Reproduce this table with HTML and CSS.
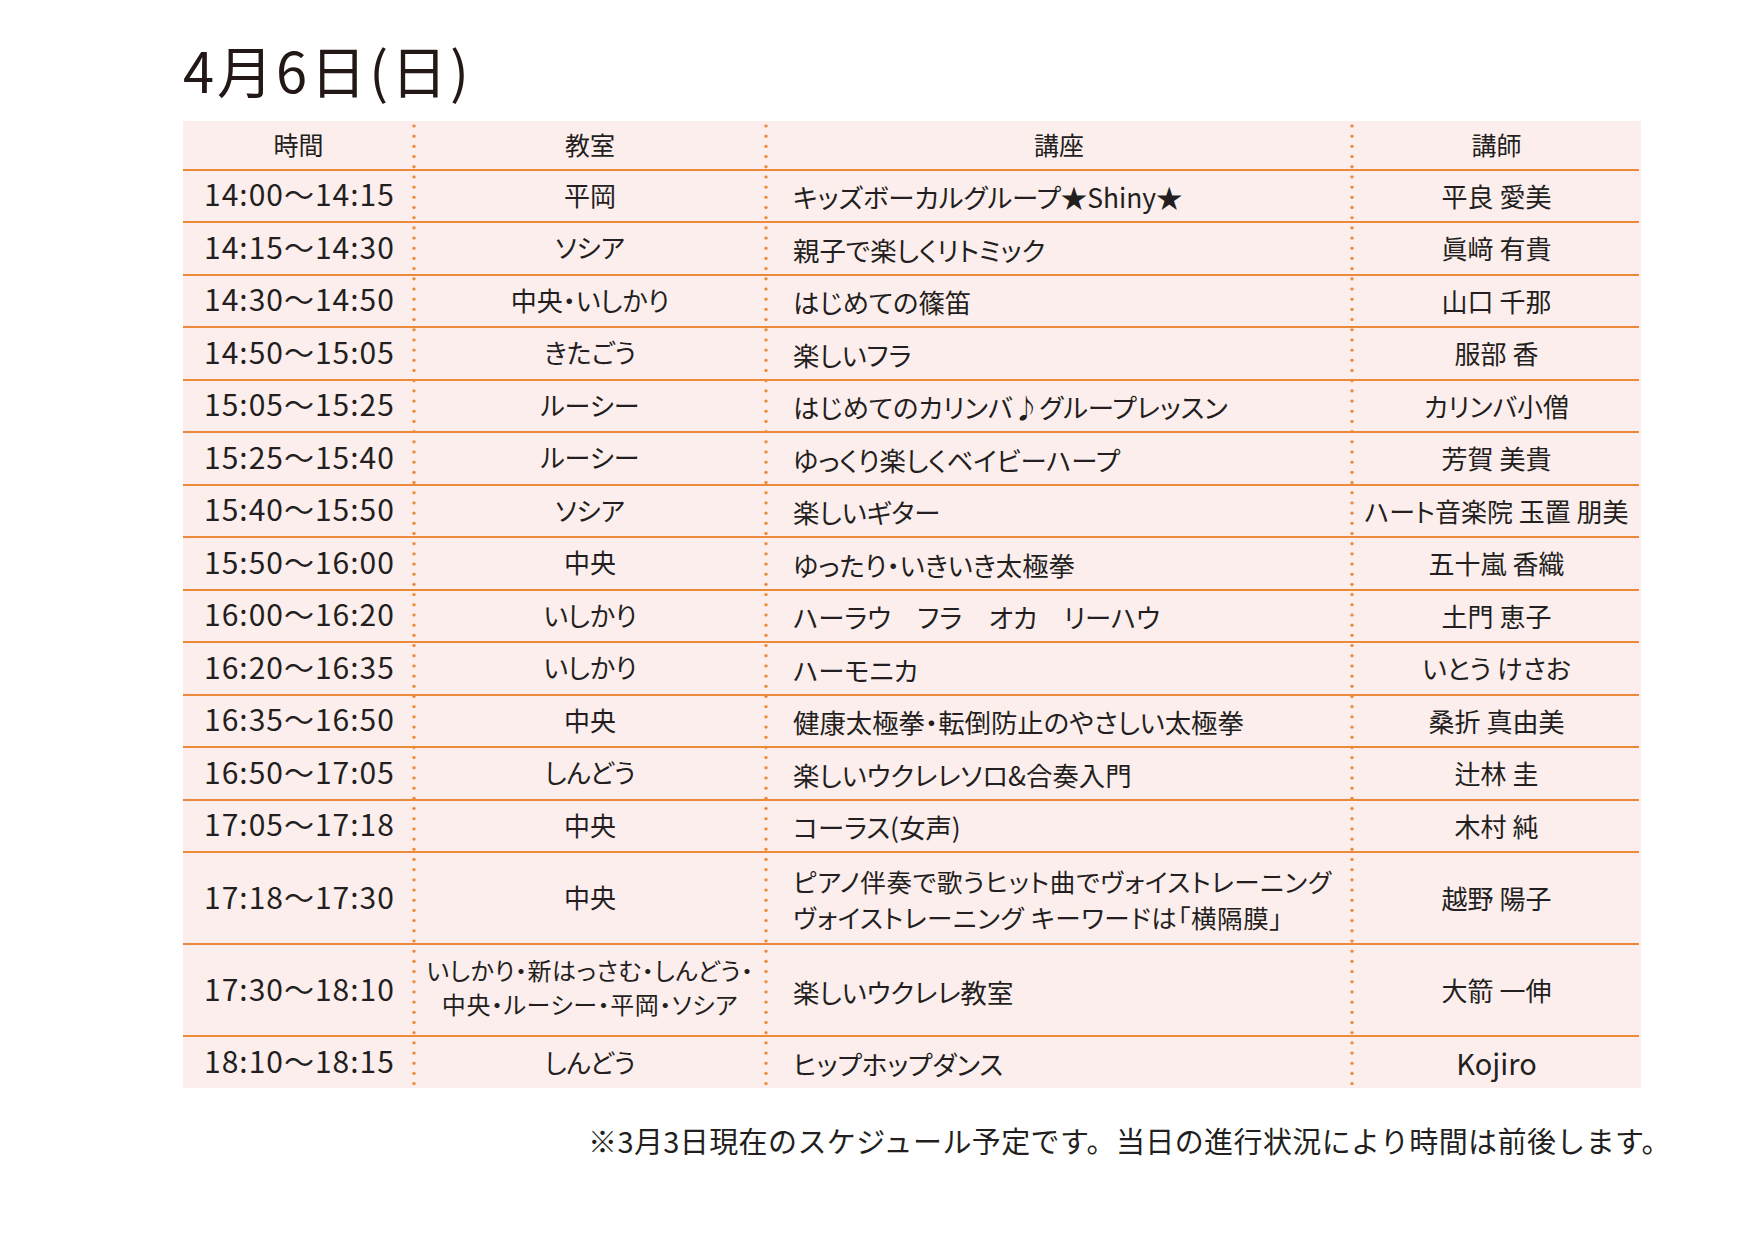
FILE: index.html
```html
<!DOCTYPE html>
<html lang="ja">
<head>
<meta charset="utf-8">
<title>4月6日(日) スケジュール</title>
<link rel="stylesheet" href="styles.css">
</head>
<body>
<div class="page">
  <h1 class="title">4月6日(日)</h1>
  <div class="table">
    <div class="row head"><div class="c">時間</div><div class="c">教室</div><div class="c">講座</div><div class="c">講師</div></div>
    <div class="row"><div class="c time">14:00〜14:15</div><div class="c room">平岡</div><div class="c course">キッズボーカルグループ★Shiny★</div><div class="c teacher">平良 愛美</div></div>
    <div class="row"><div class="c time">14:15〜14:30</div><div class="c room">ソシア</div><div class="c course">親子で楽しくリトミック</div><div class="c teacher">眞﨑 有貴</div></div>
    <div class="row"><div class="c time">14:30〜14:50</div><div class="c room">中央・いしかり</div><div class="c course">はじめての篠笛</div><div class="c teacher">山口 千那</div></div>
    <div class="row"><div class="c time">14:50〜15:05</div><div class="c room">きたごう</div><div class="c course">楽しいフラ</div><div class="c teacher">服部 香</div></div>
    <div class="row"><div class="c time">15:05〜15:25</div><div class="c room">ルーシー</div><div class="c course">はじめてのカリンバ♪グループレッスン</div><div class="c teacher">カリンバ小僧</div></div>
    <div class="row"><div class="c time">15:25〜15:40</div><div class="c room">ルーシー</div><div class="c course">ゆっくり楽しくベイビーハープ</div><div class="c teacher">芳賀 美貴</div></div>
    <div class="row"><div class="c time">15:40〜15:50</div><div class="c room">ソシア</div><div class="c course">楽しいギター</div><div class="c teacher">ハート音楽院 玉置 朋美</div></div>
    <div class="row"><div class="c time">15:50〜16:00</div><div class="c room">中央</div><div class="c course">ゆったり・いきいき太極拳</div><div class="c teacher">五十嵐 香織</div></div>
    <div class="row"><div class="c time">16:00〜16:20</div><div class="c room">いしかり</div><div class="c course">ハーラウ　フラ　オカ　リーハウ</div><div class="c teacher">土門 恵子</div></div>
    <div class="row"><div class="c time">16:20〜16:35</div><div class="c room">いしかり</div><div class="c course">ハーモニカ</div><div class="c teacher">いとう けさお</div></div>
    <div class="row"><div class="c time">16:35〜16:50</div><div class="c room">中央</div><div class="c course">健康太極拳・転倒防止のやさしい太極拳</div><div class="c teacher">桑折 真由美</div></div>
    <div class="row"><div class="c time">16:50〜17:05</div><div class="c room">しんどう</div><div class="c course">楽しいウクレレソロ&amp;合奏入門</div><div class="c teacher">辻林 圭</div></div>
    <div class="row"><div class="c time">17:05〜17:18</div><div class="c room">中央</div><div class="c course">コーラス(女声)</div><div class="c teacher">木村 純</div></div>
    <div class="row tall"><div class="c time">17:18〜17:30</div><div class="c room">中央</div><div class="c course two"><span class="ln">ピアノ伴奏で歌うヒット曲でヴォイストレーニング</span><span class="ln">ヴォイストレーニング キーワードは「横隔膜」</span></div><div class="c teacher">越野 陽子</div></div>
    <div class="row tall"><div class="c time">17:30〜18:10</div><div class="c room two small"><span class="ln">いしかり・新はっさむ・しんどう・</span><span class="ln">中央・ルーシー・平岡・ソシア</span></div><div class="c course">楽しいウクレレ教室</div><div class="c teacher">大箭 一伸</div></div>
    <div class="row last"><div class="c time">18:10〜18:15</div><div class="c room">しんどう</div><div class="c course">ヒップホップダンス</div><div class="c teacher lat">Kojiro</div></div>
  </div>
  <p class="note">※3月3日現在のスケジュール予定です。当日の進行状況により時間は前後します。</p>
</div>
</body>
</html>
```

FILE: styles.css
```css
html, body {
  margin: 0;
  background: #ffffff;
}
body {
  font-family: "Noto Sans CJK JP", "Noto Sans", sans-serif;
  color: #231f20;
}
.page {
  padding-left: 183px;
}
.title {
  margin: 0 0 20px 0;
  padding-top: 37px;
  height: 64px;
  font-size: 56px;
  line-height: 64px;
  font-weight: 400;
  letter-spacing: 3px;
  color: #231815;
}
.table {
  width: 1458px;
  background-color: #fdeeee;
  background-image:
    radial-gradient(circle at 2px 5px, #ec8a3c 1.4px, rgba(236,138,60,0) 1.9px),
    radial-gradient(circle at 2px 5px, #ec8a3c 1.4px, rgba(236,138,60,0) 1.9px),
    radial-gradient(circle at 2px 5px, #ec8a3c 1.4px, rgba(236,138,60,0) 1.9px);
  background-size: 4px 10.2px;
  background-repeat: repeat-y;
  background-position: 228.6px 0, 581px 0, 1167px 0;
}
.row {
  display: grid;
  grid-template-columns: 231px 352px 586px 289px;
  box-sizing: border-box;
  height: 52.5px;
  border-bottom: 2px solid #ec8a3c;
  margin-right: 2px;
}
.row.head {
  height: 49.5px;
}
.row.tall {
  height: 92px;
}
.row.last {
  height: 51px;
  border-bottom: none;
}
.c {
  display: flex;
  align-items: center;
  font-size: 26px;
  line-height: 35px;
  font-feature-settings: "palt";
  white-space: nowrap;
}
.c.two {
  flex-direction: column;
  justify-content: center;
}
.ln {
  display: block;
}
.head .c {
  justify-content: center;
  font-size: 25px;
}
.time {
  padding-left: 21px;
  font-size: 30px;
  letter-spacing: 1px;
  font-feature-settings: normal;
  padding-bottom: 4px;
}
.room {
  justify-content: center;
  text-align: center;
  padding-bottom: 3px;
}
.room.small {
  font-size: 24px;
  line-height: 34.5px;
  letter-spacing: 0.6px;
  padding-bottom: 6px;
  align-items: center;
}
.course {
  padding-left: 27px;
  padding-top: 2px;
  font-size: 26.4px;
}
.course.two {
  align-items: flex-start;
  font-size: 25.5px;
  line-height: 36px;
  letter-spacing: 0.7px;
}
.teacher {
  justify-content: center;
  padding-bottom: 1px;
}
.teacher.lat {
  font-size: 29px;
}
.note {
  margin: 32px 0 0 0;
  padding-right: 84px;
  text-align: right;
  font-size: 29px;
  line-height: 40px;
  letter-spacing: 0.4px;
}
```
